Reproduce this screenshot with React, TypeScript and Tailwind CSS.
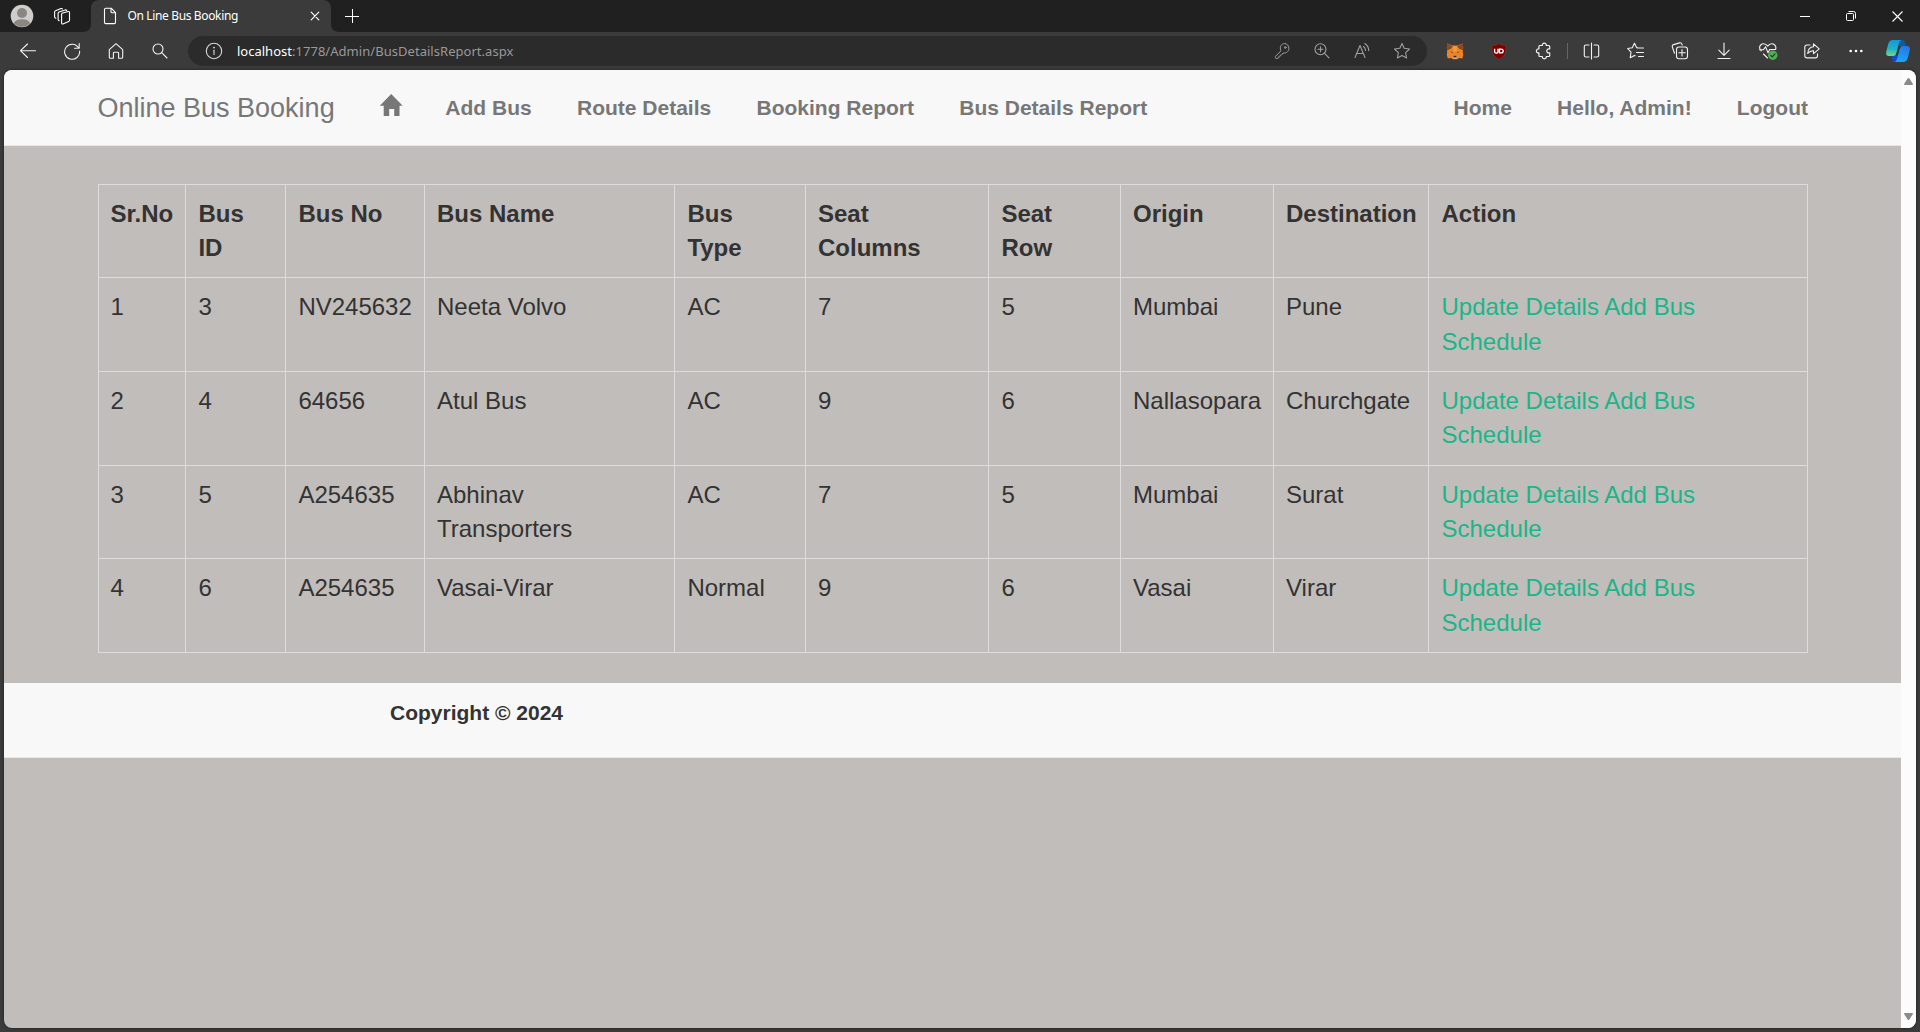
import React from "react";

type P = { children?: React.ReactNode };

const Icon = ({ size = 20, sw = 1.1, children }: P & { size?: number; sw?: number }) => (
  <svg width={size} height={size} viewBox={`0 0 ${size} ${size}`} fill="none" stroke="currentColor" strokeWidth={sw} strokeLinecap="round" strokeLinejoin="round">
    {children}
  </svg>
);

const Slot = ({ children }: P) => <div className="flex h-full w-11 shrink-0 items-center justify-center">{children}</div>;
const PillSlot = ({ children }: P) => <div className="flex w-10 shrink-0 items-center justify-center text-[#a0a0a0]">{children}</div>;
const WindowSlot = ({ children }: P) => <div className="flex h-full w-[46px] shrink-0 items-center justify-center">{children}</div>;

function TitleBar() {
  return (
    <div className="flex h-8 bg-[#202020] text-white">
      <div className="flex w-11 items-center justify-center">
        <svg width="24" height="24" viewBox="0 0 24 24">
          <defs>
            <clipPath id="avatar"><circle cx="12" cy="12" r="10.8" /></clipPath>
          </defs>
          <circle cx="12" cy="12" r="11.3" fill="#d0cecb" />
          <g clipPath="url(#avatar)" fill="#8b8682">
            <circle cx="12" cy="9" r="5" />
            <ellipse cx="12" cy="19.8" rx="8.2" ry="4.6" />
          </g>
        </svg>
      </div>
      <div className="flex w-9 items-center justify-center">
        <Icon size={18}>
          <path d="M9.200 6.200 15.500 4.500c.8-.2 1.300.2 1.300 1v7.700c0 .6-.3 1-.8 1.200l-5.800 2.500c-.8.300-1.300-.1-1.300-.8V7.400c0-.6.3-1 .8-1.200z" transform="translate(-.3 0)" />
          <path d="M6.300 13.800c-.8-.1-1.200-.5-1.200-1.300V6.200c0-.7.300-1.100.9-1.300l6.300-2c.7-.2 1.200 0 1.400.600" />
          <path d="M2.800 11.300c-.8-.3-1.200-.7-1.200-1.500V5c0-.7.300-1.100.9-1.300L8 1.600c.7-.2 1.200-.1 1.500.200" />
        </Icon>
      </div>
      <div className="flex w-[262px]">
        <svg className="self-end" width="11" height="8" viewBox="0 0 11 8"><path d="M11 0v8H2c6 0 9-3 9-8z" fill="#3b3b3b" /></svg>
        <div className="flex w-60 shrink-0 items-center rounded-t-lg bg-[#3b3b3b]">
          <svg className="ml-[12px] shrink-0" width="14" height="18" viewBox="0 0 14 18" fill="none" stroke="#fff" strokeWidth="1.100" strokeLinejoin="round">
            <path d="M1.500 2.500c0-.8.500-1.300 1.300-1.300h5.400l4.300 4.500v9.600c0 .8-.5 1.300-1.300 1.300H2.800c-.8 0-1.300-.5-1.300-1.300z" />
            <path d="M8 1.300v3.400c0 .7.400 1.100 1.100 1.100h3.300" />
          </svg>
          <span className="ml-[10.500px] w-[182.500px] shrink-0 whitespace-nowrap text-[12px] leading-8 tracking-[-0.36px]">On Line Bus Booking</span>
          <Icon size={10} sw={1.200}><path d="M1.200 1.200l7.600 7.600M8.800 1.200 1.200 8.800" /></Icon>
        </div>
        <svg className="self-end" width="11" height="8" viewBox="0 0 11 8"><path d="M0 0v8h9C3 8 0 5 0 0z" fill="#3b3b3b" /></svg>
      </div>
      <div className="flex w-5 items-center justify-center">
        <svg width="14" height="14" viewBox="0 0 14 14" stroke="#fff"><path d="M7.500 0v14M0 7.500h14" /></svg>
      </div>
      <div className="ml-auto flex">
        <WindowSlot><svg width="10" height="10" viewBox="0 0 10 10" stroke="#fff"><path d="M0 5.500h10" /></svg></WindowSlot>
        <WindowSlot>
          <svg width="10" height="10" viewBox="0 0 10 10" fill="none" stroke="#fff"><rect x=".5" y="2.500" width="7" height="7" rx="1" /><path d="M2.500.5h5a2 2 0 0 1 2 2v5" /></svg>
        </WindowSlot>
        <WindowSlot><svg width="11" height="11" viewBox="0 0 11 11" stroke="#fff" strokeWidth="1.100"><path d="M.5.500l10 10M10.500.5l-10 10" /></svg></WindowSlot>
      </div>
    </div>
  );
}

function AddressBar() {
  return (
    <div className="ml-1.5 flex h-[30px] w-[1239px] shrink-0 items-center rounded-full bg-[#2b2b2b]">
      <div className="ml-[16px] text-[#d8d8d8]">
        <Icon size={20}>
          <circle cx="10" cy="10" r="7.700" />
          <path d="M10 9.200v4.300" />
          <circle cx="10" cy="6.600" r=".4" fill="currentColor" />
        </Icon>
      </div>
      <div className="ml-[13px] flex pt-px text-[13px] text-[#999]">
        <span className="text-white">localhost</span>
        <span className="tracking-[0.04px]">:1778/Admin/BusDetailsReport.aspx</span>
      </div>
      <div className="mr-[5px] ml-auto flex">
        <PillSlot>
          <Icon size={18} sw={1}>
            <path d="M7.300 9.500 2.500 14.300c-.3.300-.4.600-.4.900v.8c0 .4.300.7.700.7h1.700c.4 0 .7-.3.700-.7v-.9h.9c.4 0 .7-.3.700-.7v-.9h.8c.4 0 .700-.2.900-.5l1.200-1.700c3.400.6 5.900-1.700 5.900-4.700 0-2.700-1.900-4.700-4.300-4.700-3.200 0-5.200 3.100-4 6.600z" transform="translate(.3 -.3)" />
            <circle cx="12.300" cy="5.500" r=".9" />
          </Icon>
        </PillSlot>
        <PillSlot>
          <Icon size={18}>
            <circle cx="7.500" cy="7.300" r="5.500" /><path d="M11.500 11.300l4.500 4.500M7.500 4.800v5M5 7.300h5" />
          </Icon>
        </PillSlot>
        <PillSlot>
          <Icon size={18}>
            <path d="M2 15.500 7 3.500l5 12M3.700 11.500h6.600M10.500 4.500c1.400 1 2 2.300 2 4M11.800 1.500c2.500 1.700 3.900 4 3.900 7" />
          </Icon>
        </PillSlot>
        <PillSlot>
          <Icon size={18}>
            <path d="M9 1.600 11.200 6.300l5.300.7-3.900 3.700 1 5.300L9 13.500 4.400 16l1-5.300L1.500 7l5.300-.7z" />
          </Icon>
        </PillSlot>
      </div>
    </div>
  );
}

function Toolbar() {
  return (
    <div className="flex h-[38px] items-center bg-[#3b3b3b] pl-1.5 text-[#f2f2f2]">
      <Slot><Icon size={18}><path d="M16.500 8.700h-15M8.500 2 1.500 8.700l7 6.800" /></Icon></Slot>
      <Slot><Icon size={18}><path d="M15.500 5.800A7.500 7.500 0 1 0 16.600 9M16.200 1.500v4.700h-4.700" /></Icon></Slot>
      <Slot><Icon size={18}><path d="M2.300 7.700 9 1.700l6.700 6v7.500c0 .7-.4 1.100-1.100 1.100h-3v-5.200c0-.5-.3-.8-.8-.8H7.200c-.5 0-.8.300-.8.800v5.200h-3c-.7 0-1.100-.4-1.100-1.100z" /></Icon></Slot>
      <Slot><Icon size={18}><circle cx="7" cy="7" r="5" /><path d="M10.700 10.700l5.300 5.300" /></Icon></Slot>
      <AddressBar />
      <div className="ml-1.5 flex h-full items-center">
        <Slot>
          <svg width="18" height="18" viewBox="0 0 18 18">
            <path d="M1.200 1.500 6.500 3.500h5l5.300-2 .4 4.500-.4 3.500.4 3.500-.8 3.500-3.200-.4-2 1.200H7l-2-1.200-3.200.4L.8 13l.4-3.500L.8 6z" fill="#ec8427" />
            <path d="M1.200 1.300 7 4.500 4.500 7 1 8.300.800 5.500zM16.800 1.300 11 4.500 13.500 7l3.500 1.300.2-2.800z" fill="#87492a" />
            <path d="M6.700 4.200h4.600l-.8 5.300h-3z" fill="#f29a38" />
            <path d="M4.200 9.300l2.600.9-.4 1zM13.800 9.300l-2.600.9.400 1z" fill="#4a3a2c" />
            <path d="M6.800 14h4.400l-.9 2.800H7.700z" fill="#cabaad" />
            <path d="M7.500 13.800h3v1.500h-3z" fill="#2a241f" />
          </svg>
        </Slot>
        <Slot>
          <svg width="16" height="17" viewBox="0 0 16 17">
            <path d="M8 .5c2.200 1.400 4.500 1.900 7 2 .3 6.500-.8 10.700-7 14C1.800 13.200.7 9 1 2.500c2.500-.1 4.800-.6 7-2z" fill="#800000" stroke="#77464a" strokeWidth=".5" />
            <path d="M3.600 5.800v2.700c0 1.200.7 1.700 1.700 1.700s1.700-.5 1.700-1.700V5.800M8.500 6.500v3.400h1.600c1.300 0 2.100-.7 2.100-1.900s-.8-1.900-2.100-1.900H8.500z" fill="none" stroke="#fff" strokeWidth="1.300" />
          </svg>
        </Slot>
        <Slot>
          <Icon size={18} sw={1.200}>
            <path transform="translate(.8 0)" d="M5 3.500h2.500c-.2-1.400.7-2.300 2-2.300s2.200.9 2 2.300H14c.6 0 .9.300.9.900v2.500c-2-.3-2.900.8-2.900 2s.9 2.300 2.900 2v2.700c0 .6-.3.900-.9.900h-2.500c.2 1.400-.7 2.300-2 2.300s-2.200-.9-2-2.300H5c-.6 0-.9-.3-.9-.9v-2.700c-1.500.2-2.500-.7-2.500-2s1-2.200 2.500-2V4.400c0-.6.3-.9.900-.9z" />
          </Icon>
        </Slot>
        <div className="w-[5px]"><div className="ml-[2px] h-4 w-px bg-[#666]" /></div>
        <Slot>
          <Icon size={18}>
            <path d="M8.500 1v16M6 3H2.800c-1 0-1.500.6-1.500 1.500v9c0 1 .6 1.500 1.500 1.500H6M11 3h3.200c1 0 1.500.6 1.500 1.500v9c0 1-.6 1.500-1.500 1.500H11" />
          </Icon>
        </Slot>
        <Slot>
          <Icon size={18}>
            <path d="M10.700 5.900 9.700 5.800 7.500 1.200 5.300 5.800l-4.700.7L4 10.200l-.8 5.600 4.300-2.400.6.300M10.500 6h6M9.500 10.500h7M11.500 14.500h5" />
          </Icon>
        </Slot>
        <Slot>
          <Icon size={18}>
            <path d="M3.500 11.300 1.400 5.200C1 4 1.500 3 2.600 2.600L8.500.9c1.100-.3 2 .2 2.400 1.200l.3.900" />
            <rect x="5.500" y="5" width="11" height="11.700" rx="2.500" /><path d="M11 7.500v6.500M7.800 10.700h6.500" />
          </Icon>
        </Slot>
        <Slot><Icon size={18}><path d="M9 1v12M3.800 8.200 9 13.300l5.200-5.100M3 16.500h12" /></Icon></Slot>
        <Slot>
          <Icon size={20}>
            <path d="M3.200 9.800C1 7.500 1.200 5.600 2.700 4c1.700-1.700 4.300-1.500 6 .2l1 1 1-1c1.700-1.700 4.300-1.900 6-.2 1.300 1.300 1.600 2.600.8 4.500M5.500 13l4 4M1.500 8.800h4L7.500 5.800l2.500 6 1.700-3.300h6" />
            <circle cx="14.800" cy="14.200" r="4.700" fill="#4caf50" stroke="none" />
            <path d="M12.700 14.300l1.500 1.500 2.800-3" stroke="#1d3d1f" />
          </Icon>
        </Slot>
        <Slot>
          <Icon size={18}>
            <path d="M7 3H4C2.700 3 1.800 3.900 1.800 5.200v8.500c0 1.300.9 2.200 2.200 2.200h8.300c1.300 0 2.200-.9 2.200-2.200v-1.800" />
            <path d="M10.500 1.800v3C7 5 5 7.300 4.700 11.500c1.500-2 3.300-2.800 5.800-2.800v3l5.700-4.900z" />
          </Icon>
        </Slot>
        <Slot>
          <svg width="16" height="4" viewBox="0 0 16 4" fill="#fff"><circle cx="2.700" cy="2" r="1.300" /><circle cx="8" cy="2" r="1.300" /><circle cx="13.300" cy="2" r="1.300" /></svg>
        </Slot>
        <div className="w-10 pl-2">
          <svg width="24" height="22" viewBox="0 0 24 22">
            <defs>
              <linearGradient id="cpA" x1=".4" y1="0" x2=".3" y2="1"><stop offset="0" stopColor="#1398e0" /><stop offset=".55" stopColor="#22b2c4" /><stop offset="1" stopColor="#6fda8c" /></linearGradient>
              <linearGradient id="cpB" x1=".6" y1="0" x2=".3" y2="1"><stop offset="0" stopColor="#2a76e4" /><stop offset="1" stopColor="#17a9fa" /></linearGradient>
            </defs>
            <path d="M12 0h4.500c1.300 0 1.900.7 2.300 2l1 4h-7z" fill="#0b5c9c" />
            <path d="M6.500 22h5l2-7-7-1-1 1.500 1 4.500z" fill="#1747cf" />
            <path d="M7 0h8.200c-1.600.8-2 2.300-2.500 4L10.500 12.500c-.7 2.500-1.500 3.500-3.500 3.500H3C.5 16-.3 14.200.3 11.500L2.200 4C3 1.200 4.500 0 7 0z" fill="url(#cpA)" />
            <path d="M17 22H8.800c1.600-.8 2-2.300 2.500-4l2.200-8.500C14.200 7 15 6 17 6h4c2.500 0 3.300 1.800 2.700 4.500L21.800 18c-.8 2.800-2.300 4-4.800 4z" fill="url(#cpB)" />
            <path d="M14.200 6.500c-1 .6-1.300 1.700-1.600 3L10.700 15.500" fill="none" stroke="#2c3a44" strokeWidth="1.300" />
          </svg>
        </div>
      </div>
    </div>
  );
}

const links = ["Add Bus", "Route Details", "Booking Report", "Bus Details Report"];
const userLinks = ["Home", "Hello, Admin!", "Logout"];
const columns = ["Sr.No", "Bus ID", "Bus No", "Bus Name", "Bus Type", "Seat Columns", "Seat Row", "Origin", "Destination", "Action"];
const indents = ["pl-[11.600px]", "pl-[12.400px]", "pl-[12.400px]", "pl-3", "pl-[12.400px]", "pl-3", "pl-[12.400px]", "pl-3", "pl-3", "pl-[12.500px]"];
const buses = [
  ["1", "3", "NV245632", "Neeta Volvo", "AC", "7", "5", "Mumbai", "Pune"],
  ["2", "4", "64656", "Atul Bus", "AC", "9", "6", "Nallasopara", "Churchgate"],
  ["3", "5", "A254635", "Abhinav Transporters", "AC", "7", "5", "Mumbai", "Surat"],
  ["4", "6", "A254635", "Vasai-Virar", "Normal", "9", "6", "Vasai", "Virar"],
];

function NavBar() {
  return (
    <nav className="flex h-[76px] items-center border-b border-[#e7e7e7] bg-[#f8f8f8] pr-[93px] pl-[93.500px] text-[21px] leading-[30px] font-bold text-[#777]">
      <a className="mr-[45.500px] text-[27px] font-normal">Online Bus Booking</a>
      <svg className="mr-[42.200px] mb-1.5" width="23" height="22" viewBox="0 0 23 22" fill="#777">
        <path d="M11.500 0 23 11.700h-3.200V22h-5.300v-7h-5v7H4V11.700H0z" transform="translate(-.3 0)" />
      </svg>
      <div className="flex gap-[45.300px]">{links.map((l) => <a key={l}>{l}</a>)}</div>
      <div className="ml-auto flex gap-[45.200px]">{userLinks.map((l) => <a key={l}>{l}</a>)}</div>
    </nav>
  );
}

function BusTable() {
  return (
    <table className="mt-[38px] ml-[94px] w-[1710px] table-fixed border-collapse text-left text-[24px] leading-[34.28px] text-[#333]">
      <colgroup>
        <col className="w-[87px]" /><col className="w-[100px]" /><col className="w-[139px]" /><col className="w-[250px]" /><col className="w-[131px]" />
        <col className="w-[183px]" /><col className="w-[132px]" /><col className="w-[153px]" /><col className="w-[155px]" /><col className="w-[379px]" />
      </colgroup>
      <thead>
        <tr className="h-[93.400px]">
          {columns.map((c, i) => <th key={c} className={`border border-[#ddd] pt-[11.500px] pr-3 align-top font-bold ${indents[i]}`}>{c}</th>)}
        </tr>
      </thead>
      <tbody>
        {buses.map((row) => (
          <tr key={row[0]} className="h-[93.600px]">
            {row.map((cell, i) => <td key={i} className={`border border-[#ddd] pt-[12.050px] pr-2.5 align-top ${indents[i]}`}>{cell}</td>)}
            <td className="border border-[#ddd] pt-[12.050px] pr-[90px] pl-[12.500px] align-top text-[#18b689]"><a>Update Details</a> <a>Add Bus Schedule</a></td>
          </tr>
        ))}
      </tbody>
    </table>
  );
}

function ScrollBar() {
  return (
    <div className="flex w-[15px] flex-col items-center justify-between bg-[#fcfcfc] pt-2 pb-2">
      <svg width="9" height="7" viewBox="0 0 9 7" fill="#8b8b8b"><path d="M3.600.6c.5-.8 1.300-.8 1.800 0L8.800 5.800c.3.600 0 1.200-.7 1.200H.900C.2 7-.1 6.400.2 5.800z" /></svg>
      <svg width="9" height="7" viewBox="0 0 9 7" fill="#8b8b8b"><path d="M3.600 6.400c.5.800 1.300.8 1.800 0L8.800 1.200C9.100.6 8.800 0 8.100 0H.9C.2 0-.1.600.2 1.200z" /></svg>
    </div>
  );
}

export default function App() {
  return (
    <div className="flex h-[1032px] w-[1920px] flex-col overflow-hidden bg-[#3b3b3b] font-['Noto_Sans',sans-serif]">
      <TitleBar />
      <Toolbar />
      <div className="mx-1 flex h-[958px] overflow-hidden rounded-lg bg-[#c1bdba] font-['Liberation_Sans',Arial,sans-serif] shadow-[0_0_3px_rgba(0,0,0,0.5)]">
        <main className="w-[1897px]">
          <NavBar />
          <BusTable />
          <footer className="mt-[30.200px] h-[75px] border-b border-[#e7e7e7] bg-[#f8f8f8] pt-[15px] pl-[386px] text-[21px] leading-[30px] font-bold text-[#333]">
            Copyright © 2024
          </footer>
        </main>
        <ScrollBar />
      </div>
    </div>
  );
}
